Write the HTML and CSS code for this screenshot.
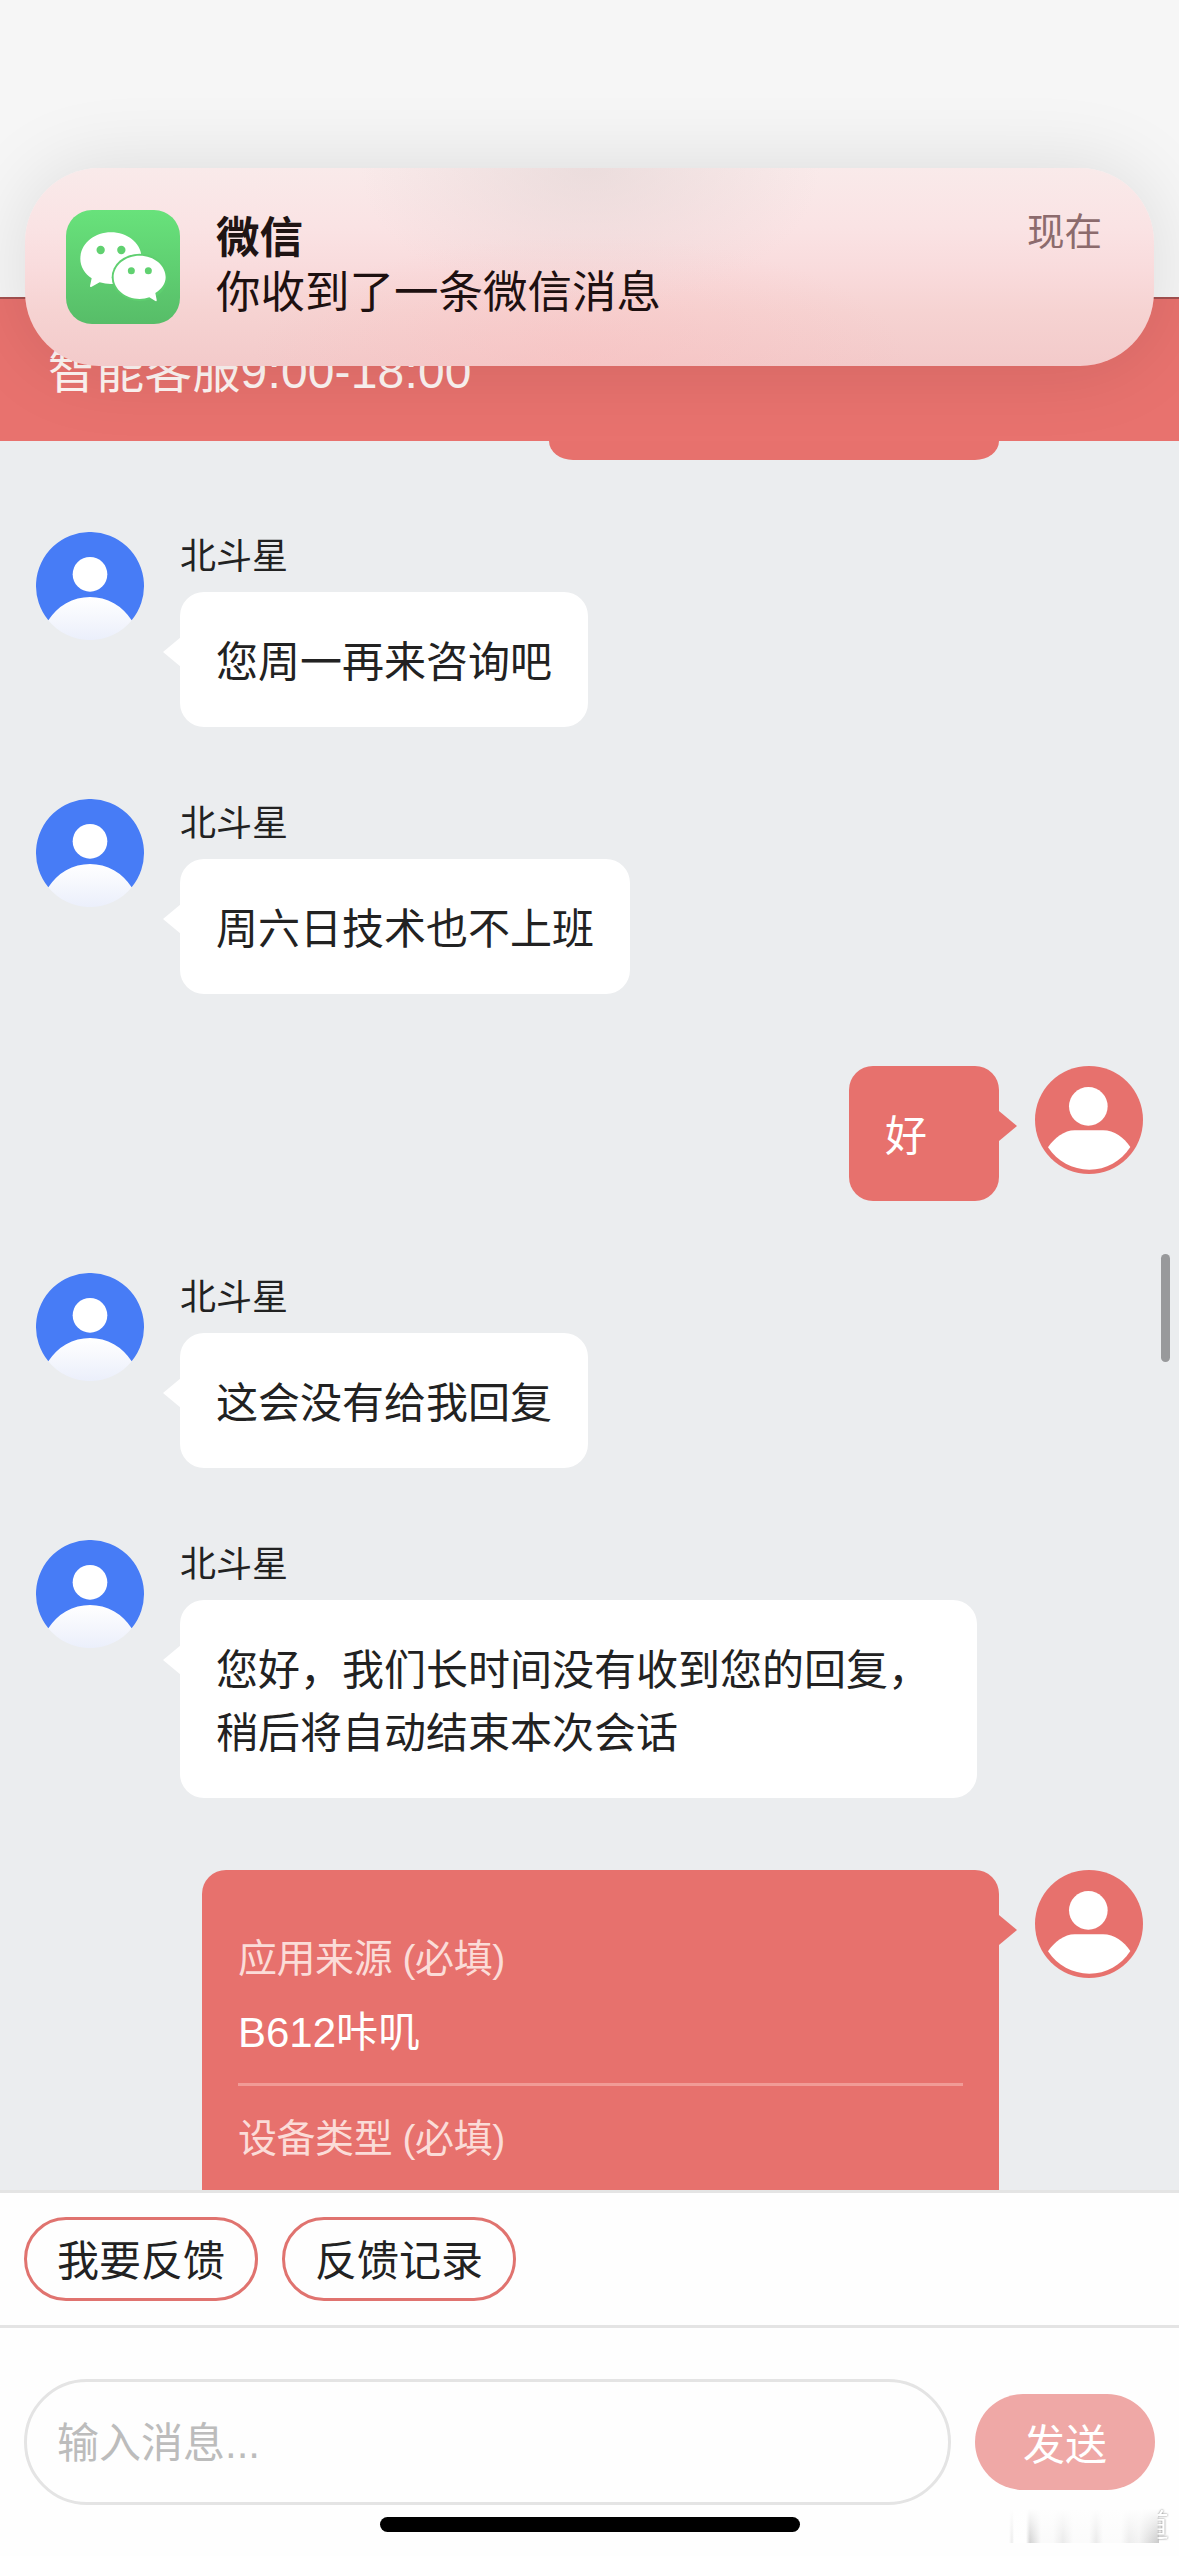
FILE: index.html
```html
<!DOCTYPE html>
<html lang="zh-CN">
<head>
<meta charset="utf-8">
<title>智能客服</title>
<link rel="stylesheet" href="styles.css">
</head>
<body>
<svg class="defs" width="0" height="0" aria-hidden="true">
  <defs>
    <linearGradient id="body-fade" gradientUnits="userSpaceOnUse" x1="0" y1="195" x2="0" y2="324">
      <stop offset="0" stop-color="#ffffff"/>
      <stop offset="1" stop-color="#ebeffb"/>
    </linearGradient>
    <linearGradient id="app-green" x1="0" y1="0" x2="0" y2="1">
      <stop offset="0" stop-color="#68e27b"/>
      <stop offset="1" stop-color="#57bd68"/>
    </linearGradient>
    <symbol id="agent" viewBox="0 0 324 324">
      <path d="M36 264A162 162 0 0 0 288 264L240 190H84Z" fill="url(#body-fade)"/>
      <path d="M37 265A162 162 0 1 1 287 265A146.600 146.600 0 0 0 37 265Z" fill="#477cf6"/>
      <circle cx="162" cy="127" r="52" fill="#fff"/>
    </symbol>
    <symbol id="visitor" viewBox="0 0 324 324">
      <circle cx="162" cy="162" r="162" fill="#e7716d"/>
      <circle cx="160" cy="121" r="58" fill="#fff"/>
      <path d="M39 244C58 216 88 193 119 193H204C238 193 266 214 286 243C257 287 214 311 163 311C112 311 67 287 39 244Z" fill="#fff"/>
    </symbol>
  </defs>
</svg>

<div class="screen">
  <div class="status"></div>
  <header class="header"><h1 class="title">智能客服9:00-18:00</h1></header>

  <main class="chat">
    <div class="previous"></div>

    <div class="row">
      <svg class="avatar"><use href="#agent"/></svg>
      <div class="content"><div class="name">北斗星</div><div class="bubble">您周一再来咨询吧</div></div>
    </div>
    <div class="row">
      <svg class="avatar"><use href="#agent"/></svg>
      <div class="content"><div class="name">北斗星</div><div class="bubble">周六日技术也不上班</div></div>
    </div>
    <div class="row mine">
      <div class="bubble">好</div>
      <svg class="avatar"><use href="#visitor"/></svg>
    </div>
    <div class="row">
      <svg class="avatar"><use href="#agent"/></svg>
      <div class="content"><div class="name">北斗星</div><div class="bubble">这会没有给我回复</div></div>
    </div>
    <div class="row">
      <svg class="avatar"><use href="#agent"/></svg>
      <div class="content"><div class="name">北斗星</div><div class="bubble">您好，我们长时间没有收到您的回复，<br>稍后将自动结束本次会话</div></div>
    </div>
    <div class="row mine">
      <div class="bubble form">
        <div class="label">应用来源 (必填)</div>
        <div class="value">B612咔叽</div>
        <div class="label">设备类型 (必填)</div>
      </div>
      <svg class="avatar"><use href="#visitor"/></svg>
    </div>
    <div class="scrollbar"></div>
  </main>

  <nav class="quick">
    <button class="pill">我要反馈</button>
    <button class="pill">反馈记录</button>
  </nav>

  <footer class="composer">
    <div class="input">输入消息...</div>
    <button class="send">发送</button>
  </footer>

  <div class="home"></div>
  <div class="mark"><span class="smear"></span><span class="mark-text">道</span></div>

  <section class="banner">
    <svg class="app" viewBox="30 30 342 342">
      <rect x="30" y="30" width="342" height="342" rx="78" fill="url(#app-green)"/>
      <path d="M165 97C114 97 73 132 73 176C73 200 86 221 107 235L102 258Q102 263 107 260L131 247Q148 252 165 252C216 252 257 218 257 175C257 131 216 97 165 97Z" fill="#fff"/>
      <ellipse cx="251" cy="232" rx="84" ry="71" fill="#5fcf70"/>
      <path d="M251 167C208 167 173 196 173 232C173 268 208 297 251 297Q267 297 280 292L298 303Q303 305 302 299L298 279C317 268 329 251 329 232C329 196 294 167 251 167Z" fill="#fff"/>
      <g fill="#60d170">
        <circle cx="134" cy="150" r="12.500"/><circle cx="196" cy="150" r="12.500"/>
        <circle cx="226" cy="212" r="10.500"/><circle cx="277" cy="212" r="10.500"/>
      </g>
    </svg>
    <div class="note">
      <div class="note-title">微信</div>
      <div class="note-body">你收到了一条微信消息</div>
    </div>
    <div class="time">现在</div>
  </section>
</div>
</body>
</html>
```
FILE: styles.css
```css
* { box-sizing: border-box; }

body {
  margin: 0;
  background: #fff;
  color: #222;
  font-family: "Liberation Sans", "Noto Sans CJK SC", sans-serif;
}

button { margin: 0; padding: 0; font: inherit; color: inherit; background: none; }

.defs { position: absolute; }

.screen {
  position: relative;
  display: flex;
  flex-direction: column;
  width: 1179px;
  height: 2556px;
  overflow: hidden;
  background: #fefefe;
}

.status { height: 297px; flex: none; background: #f6f6f6; }

.header {
  display: flex;
  align-items: center;
  flex: none;
  height: 144px;
  padding: 4px 48px 0;
  border-top: 2px solid #a45150;
  background: #e8726e;
  color: #fff6f4;
}
.title { margin: 0; font-size: 48px; line-height: 72px; font-weight: 400; letter-spacing: .15px; }

.chat {
  position: relative;
  z-index: 1;
  display: flex;
  flex-direction: column;
  flex: none;
  gap: 72px;
  height: 1749px;
  overflow: hidden;
  background: #ebedef;
}

.previous {
  flex: none;
  align-self: flex-end;
  width: 450px;
  height: 19px;
  margin-right: 180px;
  border-radius: 0 0 24px 24px / 0 0 19px 19px;
  background: #e7716d;
}

.row { display: flex; flex: none; align-items: flex-start; gap: 36px; padding: 0 36px; }
.mine { justify-content: flex-end; }
.avatar { flex: none; width: 108px; height: 108px; }
.content { display: flex; flex-direction: column; align-items: flex-start; }
.name { height: 60px; padding-top: 2px; font-size: 36px; line-height: 46px; }

.bubble {
  position: relative;
  min-width: 150px;
  max-width: 797px;
  padding: 39px 36px 33px;
  border-radius: 24px;
  background: #fff;
  font-size: 42px;
  line-height: 63px;
  white-space: nowrap;
}
.content .bubble:has(br) { width: 797px; }
.bubble::before {
  content: "";
  position: absolute;
  top: 45px;
  left: -17px;
  width: 18px;
  height: 30px;
  background: inherit;
  clip-path: polygon(0 50%, 100% 0, 100% 100%);
}
.mine .bubble { background: #e7716d; color: #fff; }
.mine .bubble::before { left: auto; right: -18px; clip-path: polygon(100% 50%, 0 0, 0 100%); }

.mine .form { width: 797px; height: 420px; padding-top: 62px; }
.label { height: 60px; font-size: 39px; line-height: 54px; letter-spacing: -.45px; color: #fbdcd8; }
.value { height: 94px; margin-bottom: 26px; padding-top: 9px; border-bottom: 3px solid #f19b96; }

.scrollbar {
  position: absolute;
  top: 813px;
  right: 9px;
  width: 9px;
  height: 108px;
  border-radius: 5px;
  background: #98999b;
}

.quick {
  display: flex;
  flex: none;
  gap: 24px;
  height: 138px;
  padding: 24px;
  border: solid #e4e4e4;
  border-width: 3px 0;
}
.pill {
  width: 234px;
  height: 84px;
  padding-top: 5px;
  border: 3px solid #e0736f;
  border-radius: 42px;
  font-size: 42px;
  line-height: 73px;
}

.composer { display: flex; align-items: center; gap: 24px; padding: 51px 24px; }
.input {
  width: 927px;
  height: 126px;
  padding: 2px 0 0 30px;
  border: 3px solid #e4e4e4;
  border-radius: 63px;
  color: #bcbcbc;
  font-size: 42px;
  line-height: 120px;
}
.send {
  width: 180px;
  height: 96px;
  padding-bottom: 2px;
  border: 0;
  border-radius: 48px;
  background: #efa8a6;
  color: #fff;
  font-size: 42px;
}

.home {
  position: absolute;
  left: 380px;
  top: 2517px;
  width: 420px;
  height: 15px;
  border-radius: 8px;
  background: #000;
}

/* faded watermark in the bottom corner */
.mark {
  position: absolute;
  left: 1009px;
  top: 2507px;
  display: flex;
}
.smear {
  width: 150px;
  height: 36px;
  background:
    linear-gradient(180deg, #fefefe 5%, #fefefe00 100%),
    linear-gradient(90deg, #fefefe 0, #ececec 3px, #fff 5px 17px, #d2d2d2 21px, #fafafa 32px, #fafafa 44px, #eaeaea 54px, #fbfbfb 64px, #fbfbfb 80px, #eaeaea 87px, #fbfbfb 94px, #fbfbfb 112px, #ececec 120px, #f3f3f3 130px, #cacaca 150px);
}
.mark-text {
  width: 32px;
  margin-left: -22px;
  color: #fff;
  font-size: 32px;
  line-height: 38px;
  text-shadow: 0 0 2px #666;
  -webkit-mask-image: linear-gradient(90deg, transparent 62%, #000 70%);
  mask-image: linear-gradient(90deg, transparent 62%, #000 70%);
}

.banner {
  position: absolute;
  z-index: 2;
  left: 25px;
  top: 168px;
  display: flex;
  align-items: flex-start;
  width: 1129px;
  height: 198px;
  padding: 0 52px 0 41px;
  border-radius: 74px;
  background:
    radial-gradient(ellipse 230px 140px at 565px 0, rgba(228, 214, 214, .65), rgba(230, 214, 214, .3) 55%, rgba(230, 214, 214, 0)),
    radial-gradient(ellipse 330px 130px at 555px 198px, rgba(250, 190, 190, .45), rgba(250, 190, 190, 0)),
    linear-gradient(180deg, #f9eaea 0, #fae3e4 30%, #f9dbdc 52%, #f6d3d2 72%, #f3caca 100%);
  box-shadow: 0 0 80px rgba(0, 0, 0, .115);
}
.app { flex: none; width: 114px; height: 114px; margin-top: 42px; }
.note { flex: 1; margin: 43px 0 0 36px; color: #201414; }
.note-title { font-size: 43.500px; line-height: 55px; font-weight: 700; }
.note-body { font-size: 44.500px; line-height: 54px; color: #1d1010; }
.time { margin-top: 37px; font-size: 37.500px; line-height: 54px; color: #8c6b6d; }
```
